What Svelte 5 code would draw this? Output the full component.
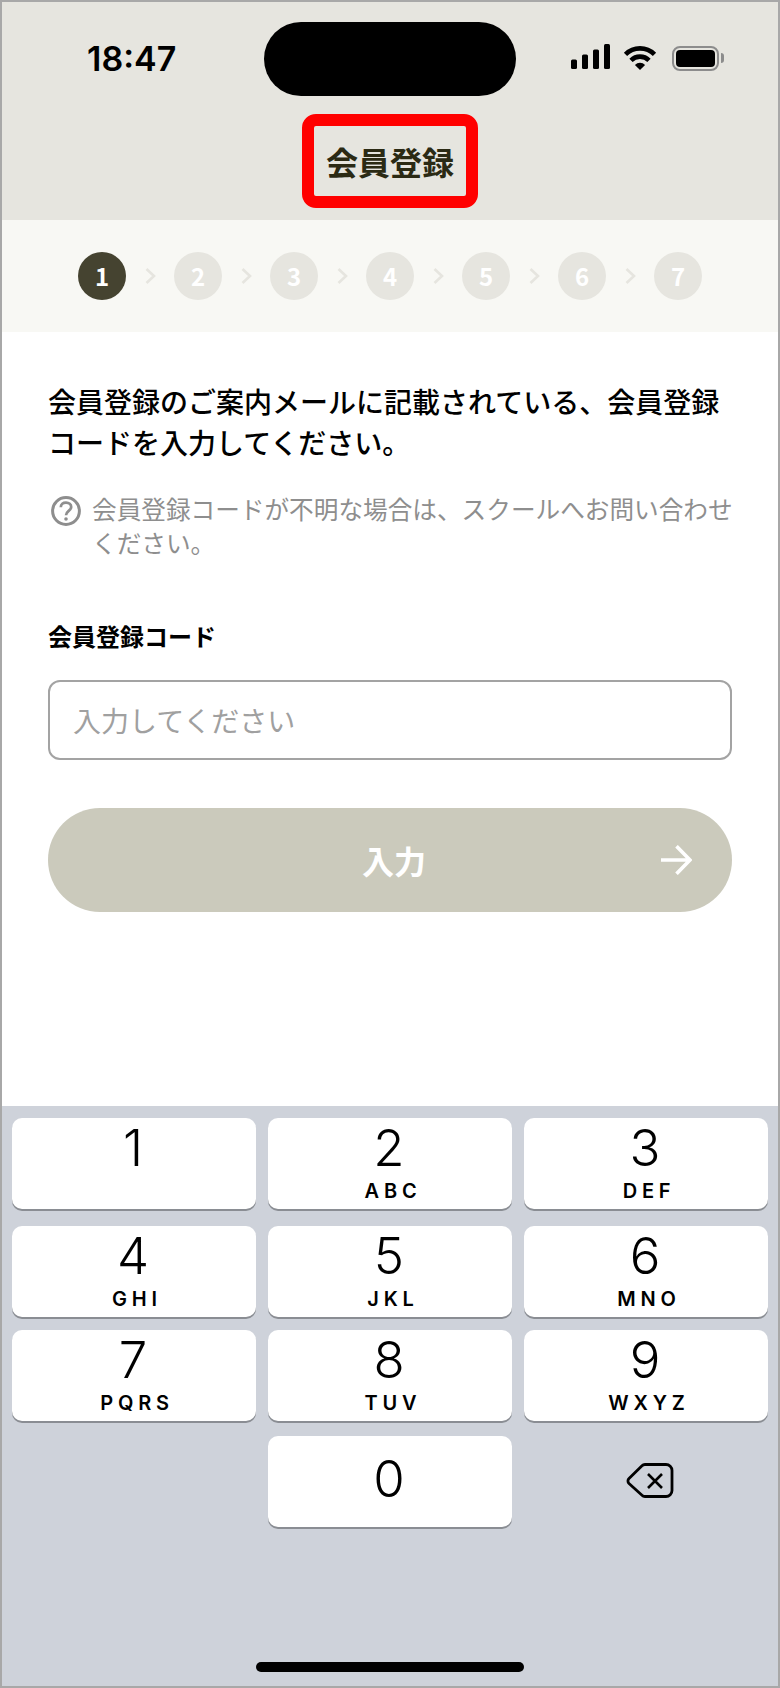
<script>
  const steps = [1, 2, 3, 4, 5, 6, 7];

  const rows = [
    [
      { digit: "1", letters: "" },
      { digit: "2", letters: "ABC" },
      { digit: "3", letters: "DEF" },
    ],
    [
      { digit: "4", letters: "GHI" },
      { digit: "5", letters: "JKL" },
      { digit: "6", letters: "MNO" },
    ],
    [
      { digit: "7", letters: "PQRS" },
      { digit: "8", letters: "TUV" },
      { digit: "9", letters: "WXYZ" },
    ],
  ];

  let code = "";
</script>

<div class="frame">
  <header class="top">
    <div class="status">
      <span class="time">18:47</span>
      <div class="notch"></div>
      <div class="icons">
        <svg class="signal" width="39" height="25" viewBox="0 0 39 25" fill="#000">
          <rect x="0" y="15.5" width="6" height="9.5" rx="1.5" />
          <rect x="11" y="10.5" width="6" height="14.5" rx="1.5" />
          <rect x="22" y="5.5" width="6" height="19.5" rx="1.5" />
          <rect x="33" y="0" width="6" height="25" rx="1.5" />
        </svg>
        <svg class="wifi" width="34" height="24" viewBox="0 0 34 24" fill="none" stroke="#000" stroke-width="4.6">
          <path d="M2.5 8.4A20.5 20.5 0 0 1 31.5 8.4" />
          <path d="M8 14.4A12.7 12.7 0 0 1 26 14.4" />
          <path d="M17 24L11.9 18.9A7.2 7.2 0 0 1 22.1 18.9Z" fill="#000" stroke="none" />
        </svg>
        <div class="battery">
          <div class="battery-body"><div class="battery-level"></div></div>
          <div class="battery-cap"></div>
        </div>
      </div>
    </div>
    <h1 class="title">会員登録</h1>
  </header>

  <nav class="stepper">
    {#each steps as step, i}
      {#if i > 0}
        <svg class="chevron" width="11" height="16" viewBox="0 0 11 16" fill="none" stroke="#e6e5df" stroke-width="2.6">
          <path d="M1.5 1L9 8L1.5 15" />
        </svg>
      {/if}
      <span class="step" class:active={step === 1}>{step}</span>
    {/each}
  </nav>

  <main class="content">
    <p class="lead">会員登録のご案内メールに記載されている、会員登録コードを入力してください。</p>
    <div class="hint">
      <svg class="hint-icon" width="30" height="30" viewBox="0 0 30 30" fill="none" stroke="#8e8e8e" stroke-width="3">
        <circle cx="15" cy="15" r="13.4" />
        <path d="M9.8 11.2C9.8 8.2 12 6.6 15 6.6C18 6.6 20.2 8.4 20.2 11C20.2 14.8 15 15 15 19.2" stroke-width="2.7" />
        <circle cx="15" cy="23" r="1.8" fill="#8e8e8e" stroke="none" />
      </svg>
      <p>会員登録コードが不明な場合は、スクールへお問い合わせください。</p>
    </div>
    <label class="label" for="code">会員登録コード</label>
    <input id="code" class="field" type="text" placeholder="入力してください" bind:value={code} />
    <button class="submit" type="button" disabled>
      <span class="submit-text">入力</span>
      <svg class="arrow" width="33" height="30" viewBox="0 0 33 30" fill="none" stroke="#fff" stroke-width="3.6">
        <path d="M2 15H31M17.5 1.2L31 15L17.5 28.8" />
      </svg>
    </button>
  </main>

  <section class="keyboard">
    {#each rows as row, r}
      <div class="row row-{r + 1}">
        {#each row as key}
          <button class="key" type="button">
            <span class="digit">{key.digit}</span>
            <span class="letters">{key.letters}</span>
          </button>
        {/each}
      </div>
    {/each}
    <div class="row row-4">
      <div class="blank"></div>
      <button class="key solo" type="button">
        <span class="digit">0</span>
      </button>
      <div class="delete">
        <svg width="48" height="35" viewBox="0 0 48 35" fill="none" stroke="#000" stroke-width="2.8" stroke-linejoin="round">
          <path d="M19 1.5H40A6 6 0 0 1 46 7.5V27.5A6 6 0 0 1 40 33.5H19A4 4 0 0 1 16 32.2L3 20.5A3.5 3.5 0 0 1 3 15.5L16 2.8A4 4 0 0 1 19 1.5Z" />
          <path d="M22 11L36 25M36 11L22 25" stroke-width="2.6" />
        </svg>
      </div>
    </div>
    <div class="home-bar"></div>
  </section>
</div>

<style>
  :global(body) {
    margin: 0;
    background: #fff;
  }

  .frame {
    box-sizing: border-box;
    width: 780px;
    height: 1688px;
    border: 2px solid #a8a8a8;
    display: flex;
    flex-direction: column;
    font-family: "Noto Sans CJK JP", "Noto Sans", sans-serif;
    color: #000;
    background: #fff;
    overflow: hidden;
  }

  .top {
    height: 218px;
    background: #e6e5df;
    display: flex;
    flex-direction: column;
    align-items: center;
    flex: none;
  }

  .status {
    width: 100%;
    padding-top: 20px;
    display: grid;
    grid-template-columns: 1fr 252px 1fr;
    align-items: center;
  }

  .time {
    padding-left: 85px;
    font-family: Inter, "Liberation Sans", sans-serif;
    font-size: 34px;
    font-weight: 600;
    line-height: 40px;
  }

  .notch {
    height: 74px;
    background: #000;
    border-radius: 37px;
  }

  .icons {
    display: flex;
    align-items: center;
    padding-left: 55px;
    margin-top: -2px;
  }

  .signal {
    margin-top: -3px;
  }

  .wifi {
    margin-left: 13px;
  }

  .battery {
    margin-left: 15px;
    display: flex;
    align-items: center;
  }

  .battery-body {
    box-sizing: border-box;
    width: 47px;
    height: 25px;
    padding: 2px;
    border: 2px solid #8c8c8c;
    border-radius: 8px;
  }

  .battery-level {
    height: 100%;
    background: #000;
    border-radius: 4px;
  }

  .battery-cap {
    width: 3px;
    height: 10px;
    margin-left: 2px;
    background: #8c8c8c;
    border-radius: 0 3px 3px 0;
  }

  .title {
    box-sizing: border-box;
    width: 176px;
    height: 94px;
    margin: 18px 0 0;
    border: 12px solid #ff0000;
    border-radius: 14px;
    display: flex;
    align-items: center;
    justify-content: center;
    font-size: 32px;
    font-weight: 700;
    color: #2b2a14;
  }

  .stepper {
    height: 112px;
    flex: none;
    background: #f8f8f4;
    display: flex;
    align-items: center;
    justify-content: center;
  }

  .step {
    width: 48px;
    height: 48px;
    border-radius: 50%;
    background: #e6e5df;
    color: #fff;
    font-size: 24px;
    font-weight: 700;
    line-height: 48px;
    text-align: center;
  }

  .step.active {
    background: #454330;
  }

  .chevron {
    margin: 0 18.5px;
  }

  .content {
    flex: 1;
    padding: 49px 46px 0;
    display: flex;
    flex-direction: column;
  }

  .lead {
    margin: 0;
    font-size: 28px;
    line-height: 41px;
    font-weight: 500;
  }

  .hint {
    margin-top: 28px;
    display: flex;
    padding-left: 3px;
    gap: 11px;
    color: #8e8e8e;
  }

  .hint p {
    margin: 0 -4px 0 0;
    flex: 1;
    font-size: 24.65px;
    line-height: 34px;
  }

  .hint-icon {
    flex: none;
    margin-top: 5px;
  }

  .label {
    margin-top: 59px;
    font-size: 24px;
    font-weight: 700;
    line-height: 36px;
  }

  .field {
    box-sizing: border-box;
    width: 100%;
    height: 80px;
    margin-top: 26px;
    padding: 0 23px;
    border: 2px solid #a3a3a3;
    border-radius: 12px;
    background: #fff;
    font-family: inherit;
    font-size: 28px;
    outline: none;
  }

  .field::placeholder {
    color: #a0a0a0;
    opacity: 1;
  }

  .submit {
    height: 104px;
    margin-top: 48px;
    border: none;
    border-radius: 52px;
    background: #cbcabc;
    color: #fff;
    font-family: inherit;
    font-size: 32px;
    font-weight: 700;
    display: grid;
    grid-template-columns: 1fr auto 1fr;
    align-items: center;
    padding: 0 40px;
  }

  .submit-text {
    grid-column: 2;
    margin-left: 8px;
  }

  .arrow {
    justify-self: end;
  }

  .keyboard {
    height: 580px;
    flex: none;
    background: #ced2da;
    padding: 12px 10px 0;
    box-sizing: border-box;
    display: flex;
    flex-direction: column;
  }

  .row {
    display: grid;
    grid-template-columns: repeat(3, 1fr);
    gap: 12px;
    height: 91px;
    flex: none;
  }

  .row-2 {
    margin-top: 17px;
  }

  .row-3 {
    margin-top: 13px;
  }

  .row-4 {
    margin-top: 15px;
  }

  .key {
    border: none;
    padding: 4px 0 0;
    border-radius: 10px;
    background: #fff;
    box-shadow: 0 2px 0 #8a8d93;
    color: #000;
    display: flex;
    flex-direction: column;
    align-items: center;
    font-family: Inter, "Liberation Sans", sans-serif;
  }

  .key.solo {
    padding-top: 17px;
  }

  .digit {
    margin-right: 2px;
    font-size: 51px;
    line-height: 52px;
    font-weight: 350;
  }

  .letters {
    height: 22px;
    margin-top: 6px;
    padding-left: 6px;
    font-size: 20px;
    line-height: 22px;
    font-weight: 600;
    letter-spacing: 4.8px;
  }

  .delete {
    display: flex;
    align-items: center;
    justify-content: center;
    padding-left: 8px;
    padding-bottom: 2px;
  }

  .home-bar {
    width: 268px;
    height: 10px;
    margin: auto auto 14px;
    border-radius: 5px;
    background: #000;
  }
</style>
